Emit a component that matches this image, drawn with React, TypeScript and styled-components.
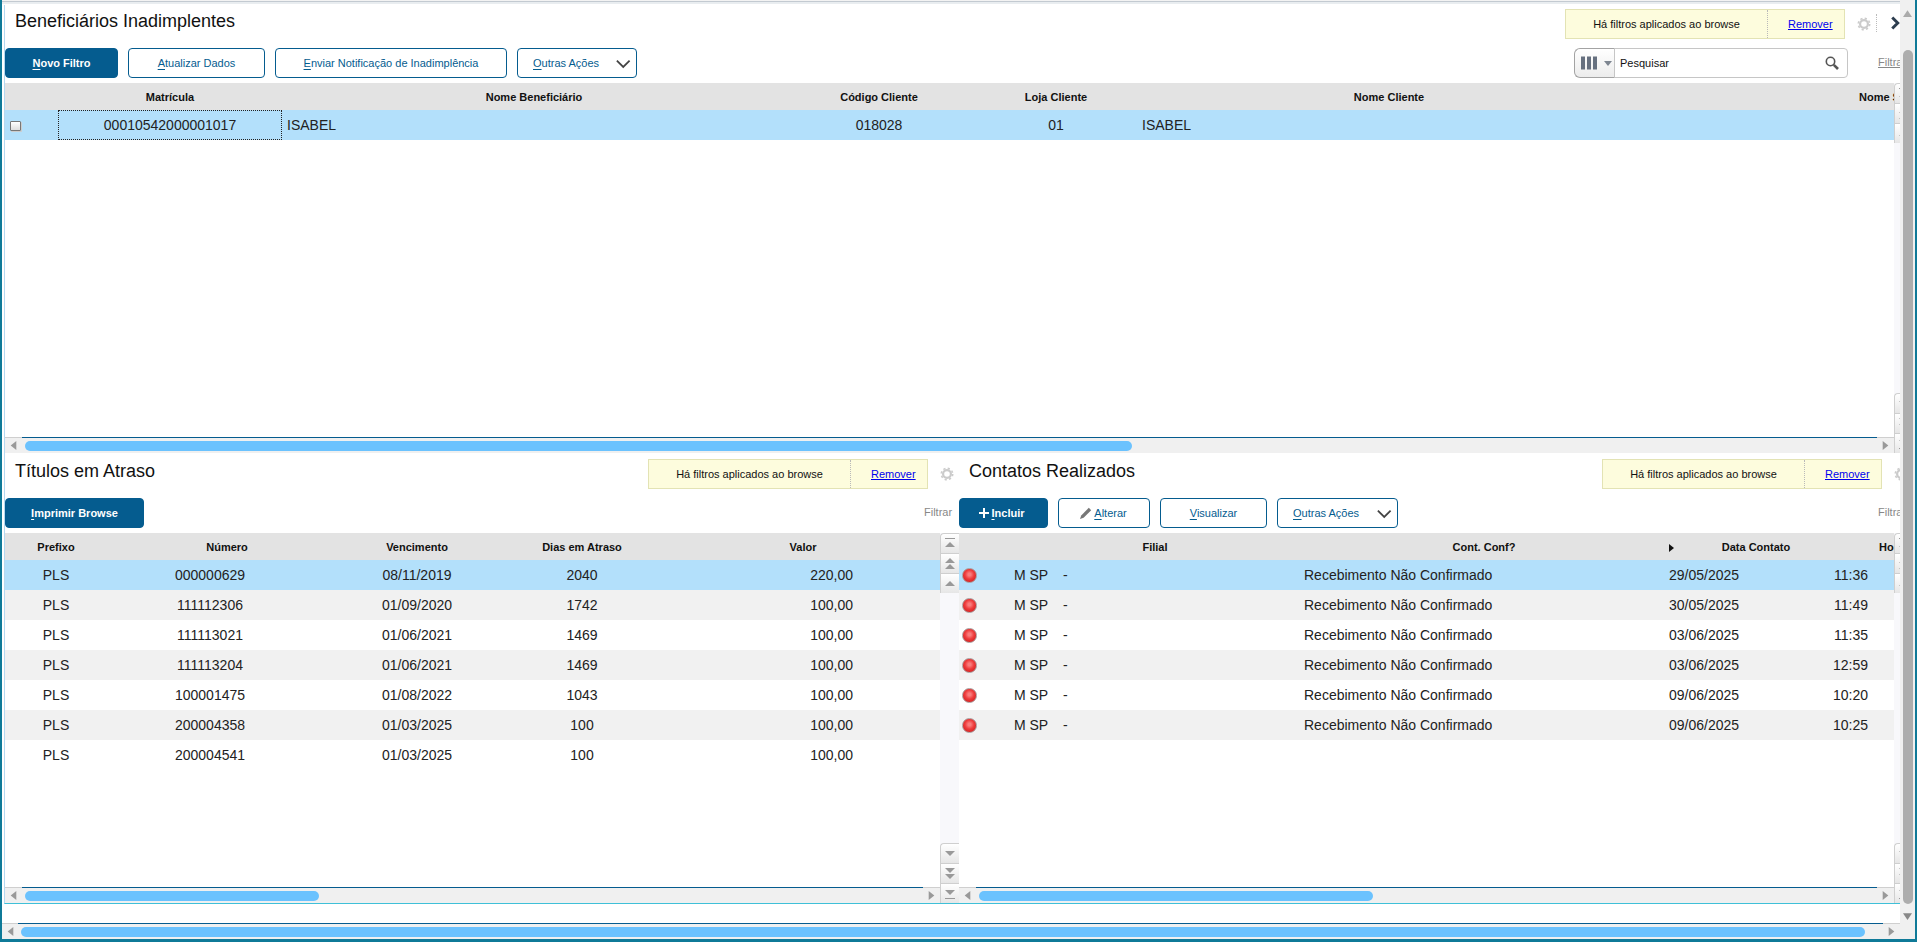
import React from "react";
import styled, { createGlobalStyle } from "styled-components";

const Global = createGlobalStyle`
  html, body { margin: 0; padding: 0; height: 100%; overflow: hidden; background: #fff; }
  body { font-family: "Liberation Sans", Arial, sans-serif; }
  * { box-sizing: border-box; }
`;

const BLUE = "#055c8f";

const Window = styled.div`
  width: 1917px; height: 942px; display: flex; overflow: hidden; background: #fff;
  border-left: 2px solid #0f7a98; border-right: 2px solid #0f7a98;
  border-bottom: 3px solid #0f7a98; box-shadow: inset 0 -1px 0 #888;
`;
const Main = styled.div`width: 1898px; height: 939px; display: flex; flex-direction: column; flex-shrink: 0;`;
const TopStrip = styled.div`
  height: 5px; flex-shrink: 0;
  background: linear-gradient(#f3f3f3 0 1px, #c3cad1 1px 2px, #e9edf0 2px 4px, #fff 4px 5px);
`;
const Panels = styled.div`
  height: 899px; flex-shrink: 0; margin-left: 2px; display: flex; flex-direction: column;
  border-left: 1px solid #b5d8f0; border-bottom: 1px solid #3fc0d8;
`;
const TopPanel = styled.section`height: 448px; flex-shrink: 0; display: flex; flex-direction: column; overflow: hidden;`;
const BottomPanels = styled.div`flex: 1; min-height: 0; display: flex;`;
const SidePanel = styled.section<{ $w: number }>`
  width: ${p => p.$w}px; flex-shrink: 0; display: flex; flex-direction: column; overflow: hidden;
`;
const Gap = styled.div`height: 19px; flex-shrink: 0;`;

const TitleRow = styled.div<{ $h: number; $pt: number }>`
  height: ${p => p.$h}px; padding-top: ${p => p.$pt}px; flex-shrink: 0; display: flex; align-items: flex-start; overflow: hidden;
`;
const Title = styled.h2<{ $w: number; $pl: number }>`
  width: ${p => p.$w}px; padding-left: ${p => p.$pl}px; flex-shrink: 0; margin: 1px 0 0;
  font-size: 18px; font-weight: 400; line-height: 22px; color: #111; white-space: nowrap;
`;
const FilterNote = styled.div`
  width: 280px; height: 30px; flex-shrink: 0; display: flex; align-items: center;
  background: #fdfcdd; border: 1px solid #e3e3b4; font-size: 11px; color: #111;
`;
const NoteText = styled.span`
  width: 202px; height: 100%; display: flex; align-items: center; justify-content: center;
  border-right: 1px dotted #b9b9b9;
`;
const NoteLink = styled.a`margin-left: 20px; color: #0000ee; text-decoration: underline; cursor: pointer;`;
const GearBox = styled.span`
  width: 15px; height: 30px; margin-left: 11px; flex-shrink: 0; display: flex; align-items: center; justify-content: center;
`;
const DotSep = styled.span`width: 1px; height: 18px; margin: 5px 0 0 5px; flex-shrink: 0; border-left: 1px dotted #bbb;`;
const CloseBox = styled.span`margin: 3px 0 0 7px; flex-shrink: 0; display: flex;`;

const Toolbar = styled.div<{ $pl: number }>`
  height: 30px; margin-bottom: 5px; padding-left: ${p => p.$pl}px; flex-shrink: 0; display: flex; gap: 10px; align-items: center; overflow: hidden;
`;
const Btn = styled.button<{ $w: number; $primary?: boolean; $pr?: number }>`
  width: ${p => p.$w}px; height: 30px; flex-shrink: 0; padding: 0 ${p => p.$pr ?? 0}px 0 0; border-radius: 4px; font: inherit; font-size: 11px;
  font-weight: ${p => (p.$primary ? 700 : 400)};
  color: ${p => (p.$primary ? "#fff" : BLUE)};
  background: ${p => (p.$primary ? BLUE : "#fff")};
  border: 1px solid ${BLUE}; display: flex; align-items: center; justify-content: center; gap: 1px;
  u { text-underline-offset: 2px; }
`;
const MoreBtn = styled(Btn)`justify-content: flex-start; padding-left: 15px; gap: 0;`;
const MoreLabel = styled.span<{ $w: number }>`width: ${p => p.$w}px; text-align: left; white-space: nowrap;`;
const Spacer = styled.div`flex: 1; min-width: 0;`;
const SearchGroup = styled.div`display: flex; height: 30px; flex-shrink: 0; margin-right: 20px;`;
const ColumnsBtn = styled.div`
  width: 41px; height: 30px; display: flex; align-items: center; padding-left: 6px;
  border: 1px solid #a3a3a3; border-right: none; border-radius: 6px 0 0 6px; background: linear-gradient(#fff, #ececec);
`;
const SearchBox = styled.div`
  width: 234px; height: 30px; border: 1px solid #c6c6c6; border-radius: 0 4px 4px 0; background: #fff; margin-left: -1px;
  display: flex; align-items: center; justify-content: space-between; padding: 0 8px 0 5px; font-size: 11px; color: #111;
`;
const FilterLabel = styled.span<{ $u?: boolean; $mr: number }>`
  width: 31px; flex-shrink: 0; margin-right: ${p => p.$mr}px; font-size: 11px; color: #888; white-space: nowrap;
  text-decoration: ${p => (p.$u ? "underline" : "none")}; margin-top: -2px;
`;

const TableRowWrap = styled.div`flex: 1; min-height: 0; display: flex;`;
const TableCol = styled.div`flex: 1; min-width: 0; display: flex; flex-direction: column; overflow: hidden;`;
const Body = styled.div`flex: 1; min-height: 0; overflow: hidden;`;
const HeaderGrid = styled.div<{ $cols: string }>`
  height: 27px; flex-shrink: 0; display: grid; grid-template-columns: ${p => p.$cols}; align-items: center;
  background: #e3e3e3; font-size: 11px; font-weight: 700; color: #111; white-space: nowrap; overflow: hidden;
`;
const RowGrid = styled.div<{ $cols: string; $bg: string }>`
  height: 30px; display: grid; grid-template-columns: ${p => p.$cols}; align-items: center;
  background: ${p => p.$bg}; font-size: 14px; color: #222; white-space: nowrap; overflow: hidden;
`;
const Cell = styled.div<{ $align?: string; $pl?: number; $pr?: number; $focus?: boolean }>`
  text-align: ${p => p.$align ?? "center"};
  padding-left: ${p => p.$pl ?? 0}px; padding-right: ${p => p.$pr ?? 0}px;
  ${p => p.$focus ? "height: 30px; line-height: 28px; border: 1px dotted #222;" : ""}
`;
const CheckBox = styled.span`
  display: block; width: 11px; height: 10px; margin: 1px 0 0 5px; border: 1px solid #777; border-radius: 1px;
  background: linear-gradient(#fff, #dedede); box-shadow: 1px 1px 0 #ccc;
`;
const Ball = styled.span`
  display: block; width: 15px; height: 15px; margin-left: 3px; border-radius: 50%; border: 1px solid #a89a9a;
  background: radial-gradient(circle at 50% 42%, #f97b7b 0 14%, #ee3d3d 45%, #d92424 75%, #b81c1c 100%);
`;
const SortArrow = styled.span`
  display: block; width: 0; height: 0; border-left: 5px solid #111; border-top: 4px solid transparent; border-bottom: 4px solid transparent; margin: 2px 0 0 1px;
`;

const Strip = styled.div<{ $w: number }>`
  width: ${p => p.$w}px; flex-shrink: 0; overflow: hidden; display: flex; flex-direction: column; justify-content: space-between; background: #f8f8fb;
`;
const Cluster = styled.div`display: flex; flex-direction: column; width: 19px;`;
const NavBtn = styled.div<{ $round?: boolean }>`
  width: 19px; height: 20px; display: flex; align-items: center; justify-content: center;
  background: linear-gradient(#fff, #e6e6e6); border-left: 1px solid #cfcfcf; border-top: 1px solid #cfcfcf;
  border-top-left-radius: ${p => (p.$round ? 4 : 0)}px; color: #999;
`;

const HTrack = styled.div`height: 16px; flex-shrink: 0; display: flex; background: #f0f0f0;`;
const HEnd = styled.div<{ $w: number }>`
  width: ${p => p.$w}px; flex-shrink: 0; border-top: 1px solid #cfcfcf; display: flex; align-items: center; justify-content: center;
`;
const HMid = styled.div`flex: 1; min-width: 0; border-top: 1px solid ${BLUE}; padding: 3px 0 0 3px;`;
const Thumb = styled.div<{ $w: number }>`width: ${p => p.$w}px; height: 10px; border-radius: 5px; background: #6bc2fe;`;

const VTrack = styled.div`width: 15px; height: 939px; flex-shrink: 0; background: #f0f0f0; display: flex; flex-direction: column; align-items: center;`;
const VTop = styled.div`height: 50px; width: 100%; flex-shrink: 0; display: flex; justify-content: center; padding-top: 9px;`;
const VThumb = styled.div`width: 10px; height: 854px; flex-shrink: 0; border-radius: 5px; background: #adadad; margin-left: 1px;`;
const VBottom = styled.div`padding-top: 8px; display: flex;`;

const Tri = ({ dir, size = 8, color = "#999" }: { dir: "up" | "down" | "left" | "right"; size?: number; color?: string }) => {
  const pts = { up: "4,1 8,7 0,7", down: "0,1 8,1 4,7", left: "6.5,0 6.5,8 1.5,4", right: "1.5,0 1.5,8 6.5,4" }[dir];
  return <svg width={size} height={size} viewBox="0 0 8 8"><polygon points={pts} fill={color} /></svg>;
};

const NavIcon = ({ kind }: { kind: "first" | "dup" | "up" | "down" | "ddown" | "last" }) => {
  const up = kind === "first" || kind === "dup" || kind === "up";
  const one = (y: number) => up
    ? <polygon key={y} points={`5,${y} 10,${y + 5} 0,${y + 5}`} fill="currentColor" />
    : <polygon key={y} points={`0,${y} 10,${y} 5,${y + 5}`} fill="currentColor" />;
  return (
    <svg width="10" height="14" viewBox="0 0 10 14">
      {kind === "first" && <><rect y="1" width="10" height="1" fill="currentColor" />{one(5)}</>}
      {kind === "last" && <>{one(3)}<rect y="11" width="10" height="1" fill="currentColor" /></>}
      {(kind === "dup" || kind === "ddown") && <>{one(1)}{one(7)}</>}
      {(kind === "up" || kind === "down") && one(4)}
    </svg>
  );
};

const NavStrip = ({ w }: { w: number }) => (
  <Strip $w={w}>
    <Cluster>
      <NavBtn $round><NavIcon kind="first" /></NavBtn>
      <NavBtn><NavIcon kind="dup" /></NavBtn>
      <NavBtn><NavIcon kind="up" /></NavBtn>
    </Cluster>
    <Cluster>
      <NavBtn $round><NavIcon kind="down" /></NavBtn>
      <NavBtn><NavIcon kind="ddown" /></NavBtn>
      <NavBtn><NavIcon kind="last" /></NavBtn>
    </Cluster>
  </Strip>
);

const HScroll = ({ thumb, left = 17 }: { thumb: number; left?: number }) => (
  <HTrack>
    <HEnd $w={left}><Tri dir="left" size={9} /></HEnd>
    <HMid><Thumb $w={thumb} /></HMid>
    <HEnd $w={17}><Tri dir="right" size={9} /></HEnd>
  </HTrack>
);

const Note = () => (
  <FilterNote>
    <NoteText>Há filtros aplicados ao browse</NoteText>
    <NoteLink>Remover</NoteLink>
  </FilterNote>
);

const Gear = () => (
  <GearBox>
    <svg width="14" height="14" viewBox="0 0 14 14" fill="none">
      <circle cx="7" cy="7" r="3.9" stroke="#cbcbcb" strokeWidth="2.2" />
      <circle cx="7" cy="7" r="5.7" stroke="#cbcbcb" strokeWidth="1.6" strokeDasharray="2.2 2.28" />
    </svg>
  </GearBox>
);

const DownChevron = () => (
  <svg width="27" height="27" viewBox="0 0 27 27" fill="none">
    <path d="M7 10.5l6.5 6.5 6.5-6.5" stroke="#444" strokeWidth="1.8" />
  </svg>
);

const TOP_COLS = "53px 224px 504px 186px 168px 498px 508px";

const LEFT_HEAD = "102px 240px 140px 190px 252px";
const LEFT_ROW = "102px 206px 208px 122px 291px";
const leftData = [
  ["000000629", "08/11/2019", "2040", "220,00"],
  ["111112306", "01/09/2020", "1742", "100,00"],
  ["111113021", "01/06/2021", "1469", "100,00"],
  ["111113204", "01/06/2021", "1469", "100,00"],
  ["100001475", "01/08/2022", "1043", "100,00"],
  ["200004358", "01/03/2025", "100", "100,00"],
  ["200004541", "01/03/2025", "100", "100,00"],
];

const RIGHT_HEAD = "392px 266px 51px 8px 160px 200px";
const RIGHT_ROW = "48px 48px 249px 335px 130px 124px";
const rightData = [
  ["29/05/2025", "11:36"],
  ["30/05/2025", "11:49"],
  ["03/06/2025", "11:35"],
  ["03/06/2025", "12:59"],
  ["09/06/2025", "10:20"],
  ["09/06/2025", "10:25"],
];

const rowBg = (i: number) => (i === 0 ? "#b3e0fb" : i % 2 === 1 ? "#f1f1f1" : "#fff");

export default function App() {
  return (
    <Window>
      <Global />
      <Main>
        <TopStrip />
        <Panels>
          <TopPanel>
            <TitleRow $h={43} $pt={4}>
              <Title $w={1560} $pl={10}>Beneficiários Inadimplentes</Title>
              <Note />
              <Gear />
              <DotSep />
              <CloseBox>
                <svg width="22" height="22" viewBox="0 0 24 24" fill="none">
                  <path d="M9 6l6 6-6 6" stroke="#2e3e50" strokeWidth="3.2" />
                </svg>
              </CloseBox>
            </TitleRow>
            <Toolbar $pl={0}>
              <Btn $w={113} $primary><span><u>N</u>ovo Filtro</span></Btn>
              <Btn $w={137}><span><u>A</u>tualizar Dados</span></Btn>
              <Btn $w={232}><span><u>E</u>nviar Notificação de Inadimplência</span></Btn>
              <MoreBtn $w={120}>
                <MoreLabel $w={78}><u>O</u>utras Ações</MoreLabel>
                <DownChevron />
              </MoreBtn>
              <Spacer />
              <SearchGroup>
                <ColumnsBtn>
                  <svg width="32" height="14" viewBox="0 0 32 14">
                    <rect x="0" y="0.5" width="4" height="13" fill="#66707f" />
                    <rect x="6" y="0.5" width="4" height="13" fill="#66707f" />
                    <rect x="12" y="0.5" width="4" height="13" fill="#66707f" />
                    <polygon points="23,5 31,5 27,10" fill="#7d8590" />
                  </svg>
                </ColumnsBtn>
                <SearchBox>
                  <span>Pesquisar</span>
                  <svg width="14" height="14" viewBox="0 0 14 14" fill="none">
                    <circle cx="5.5" cy="5.5" r="4.2" stroke="#555" strokeWidth="1.6" />
                    <path d="M8.8 8.8l4.2 4.2" stroke="#555" strokeWidth="2.6" />
                  </svg>
                </SearchBox>
              </SearchGroup>
              <FilterLabel $u $mr={-9}>Filtrar</FilterLabel>
            </Toolbar>
            <TableRowWrap>
              <TableCol>
                <HeaderGrid $cols={TOP_COLS}>
                  <Cell />
                  <Cell>Matrícula</Cell>
                  <Cell>Nome Beneficiário</Cell>
                  <Cell>Código Cliente</Cell>
                  <Cell>Loja Cliente</Cell>
                  <Cell>Nome Cliente</Cell>
                  <Cell>Nome Social</Cell>
                </HeaderGrid>
                <Body>
                  <RowGrid $cols={TOP_COLS} $bg="#b3e0fb">
                    <Cell $align="left"><CheckBox /></Cell>
                    <Cell $focus>00010542000001017</Cell>
                    <Cell $align="left" $pl={5}>ISABEL</Cell>
                    <Cell>018028</Cell>
                    <Cell>01</Cell>
                    <Cell $align="left" $pl={2}>ISABEL</Cell>
                    <Cell />
                  </RowGrid>
                </Body>
                <HScroll thumb={1107} />
              </TableCol>
              <NavStrip w={6} />
            </TableRowWrap>
          </TopPanel>
          <BottomPanels>
            <SidePanel $w={954}>
              <TitleRow $h={45} $pt={6}>
                <Title $w={643} $pl={10}>Títulos em Atraso</Title>
                <Note />
                <Gear />
              </TitleRow>
              <Toolbar $pl={0}>
                <Btn $w={139} $primary><span><u>I</u>mprimir Browse</span></Btn>
                <Spacer />
                <FilterLabel $mr={4}>Filtrar</FilterLabel>
              </Toolbar>
              <TableRowWrap>
                <TableCol>
                  <HeaderGrid $cols={LEFT_HEAD}>
                    <Cell>Prefixo</Cell>
                    <Cell>Número</Cell>
                    <Cell>Vencimento</Cell>
                    <Cell>Dias em Atraso</Cell>
                    <Cell>Valor</Cell>
                  </HeaderGrid>
                  <Body>
                    {leftData.map((r, i) => (
                      <RowGrid key={r[0]} $cols={LEFT_ROW} $bg={rowBg(i)}>
                        <Cell>PLS</Cell>
                        <Cell>{r[0]}</Cell>
                        <Cell>{r[1]}</Cell>
                        <Cell>{r[2]}</Cell>
                        <Cell $align="right" $pr={81}>{r[3]}</Cell>
                      </RowGrid>
                    ))}
                  </Body>
                  <HScroll thumb={294} />
                </TableCol>
                <NavStrip w={19} />
              </TableRowWrap>
            </SidePanel>
            <SidePanel $w={941}>
              <TitleRow $h={45} $pt={6}>
                <Title $w={643} $pl={10}>Contatos Realizados</Title>
                <Note />
                <Gear />
              </TitleRow>
              <Toolbar $pl={0}>
                <Btn $w={89} $primary $pr={4}>
                  <svg width="12" height="12" viewBox="0 0 12 12"><path d="M6 1v10M1 6h10" stroke="#fff" strokeWidth="2" /></svg>
                  <span><u>I</u>ncluir</span>
                </Btn>
                <Btn $w={92} $pr={2}>
                  <svg width="14" height="14" viewBox="0 0 14 14"><path d="M1 13l1.2-3.6L9.8 1.8l2.4 2.4-7.6 7.6z" fill="#777" /></svg>
                  <span><u>A</u>lterar</span>
                </Btn>
                <Btn $w={107}><span><u>V</u>isualizar</span></Btn>
                <MoreBtn $w={121}>
                  <MoreLabel $w={79}><u>O</u>utras Ações</MoreLabel>
                  <DownChevron />
                </MoreBtn>
                <Spacer />
                <FilterLabel $mr={-9}>Filtrar</FilterLabel>
              </Toolbar>
              <TableRowWrap>
                <TableCol>
                  <HeaderGrid $cols={RIGHT_HEAD}>
                    <Cell>Filial</Cell>
                    <Cell>Cont. Conf?</Cell>
                    <Cell />
                    <Cell><SortArrow /></Cell>
                    <Cell>Data Contato</Cell>
                    <Cell $align="left" $pl={43}>Hora</Cell>
                  </HeaderGrid>
                  <Body>
                    {rightData.map((r, i) => (
                      <RowGrid key={r[0] + r[1]} $cols={RIGHT_ROW} $bg={rowBg(i)}>
                        <Cell $align="left"><Ball /></Cell>
                        <Cell>M SP</Cell>
                        <Cell $align="left" $pl={8}>-</Cell>
                        <Cell $align="left">Recebimento Não Confirmado</Cell>
                        <Cell>{r[0]}</Cell>
                        <Cell $align="right" $pr={25}>{r[1]}</Cell>
                      </RowGrid>
                    ))}
                  </Body>
                  <HScroll thumb={394} />
                </TableCol>
                <NavStrip w={6} />
              </TableRowWrap>
            </SidePanel>
          </BottomPanels>
        </Panels>
        <Gap />
        <HScroll thumb={1844} left={16} />
      </Main>
      <VTrack>
        <VTop><Tri dir="up" size={9} color="#aaa" /></VTop>
        <VThumb />
        <VBottom><Tri dir="down" size={9} color="#888" /></VBottom>
      </VTrack>
    </Window>
  );
}
